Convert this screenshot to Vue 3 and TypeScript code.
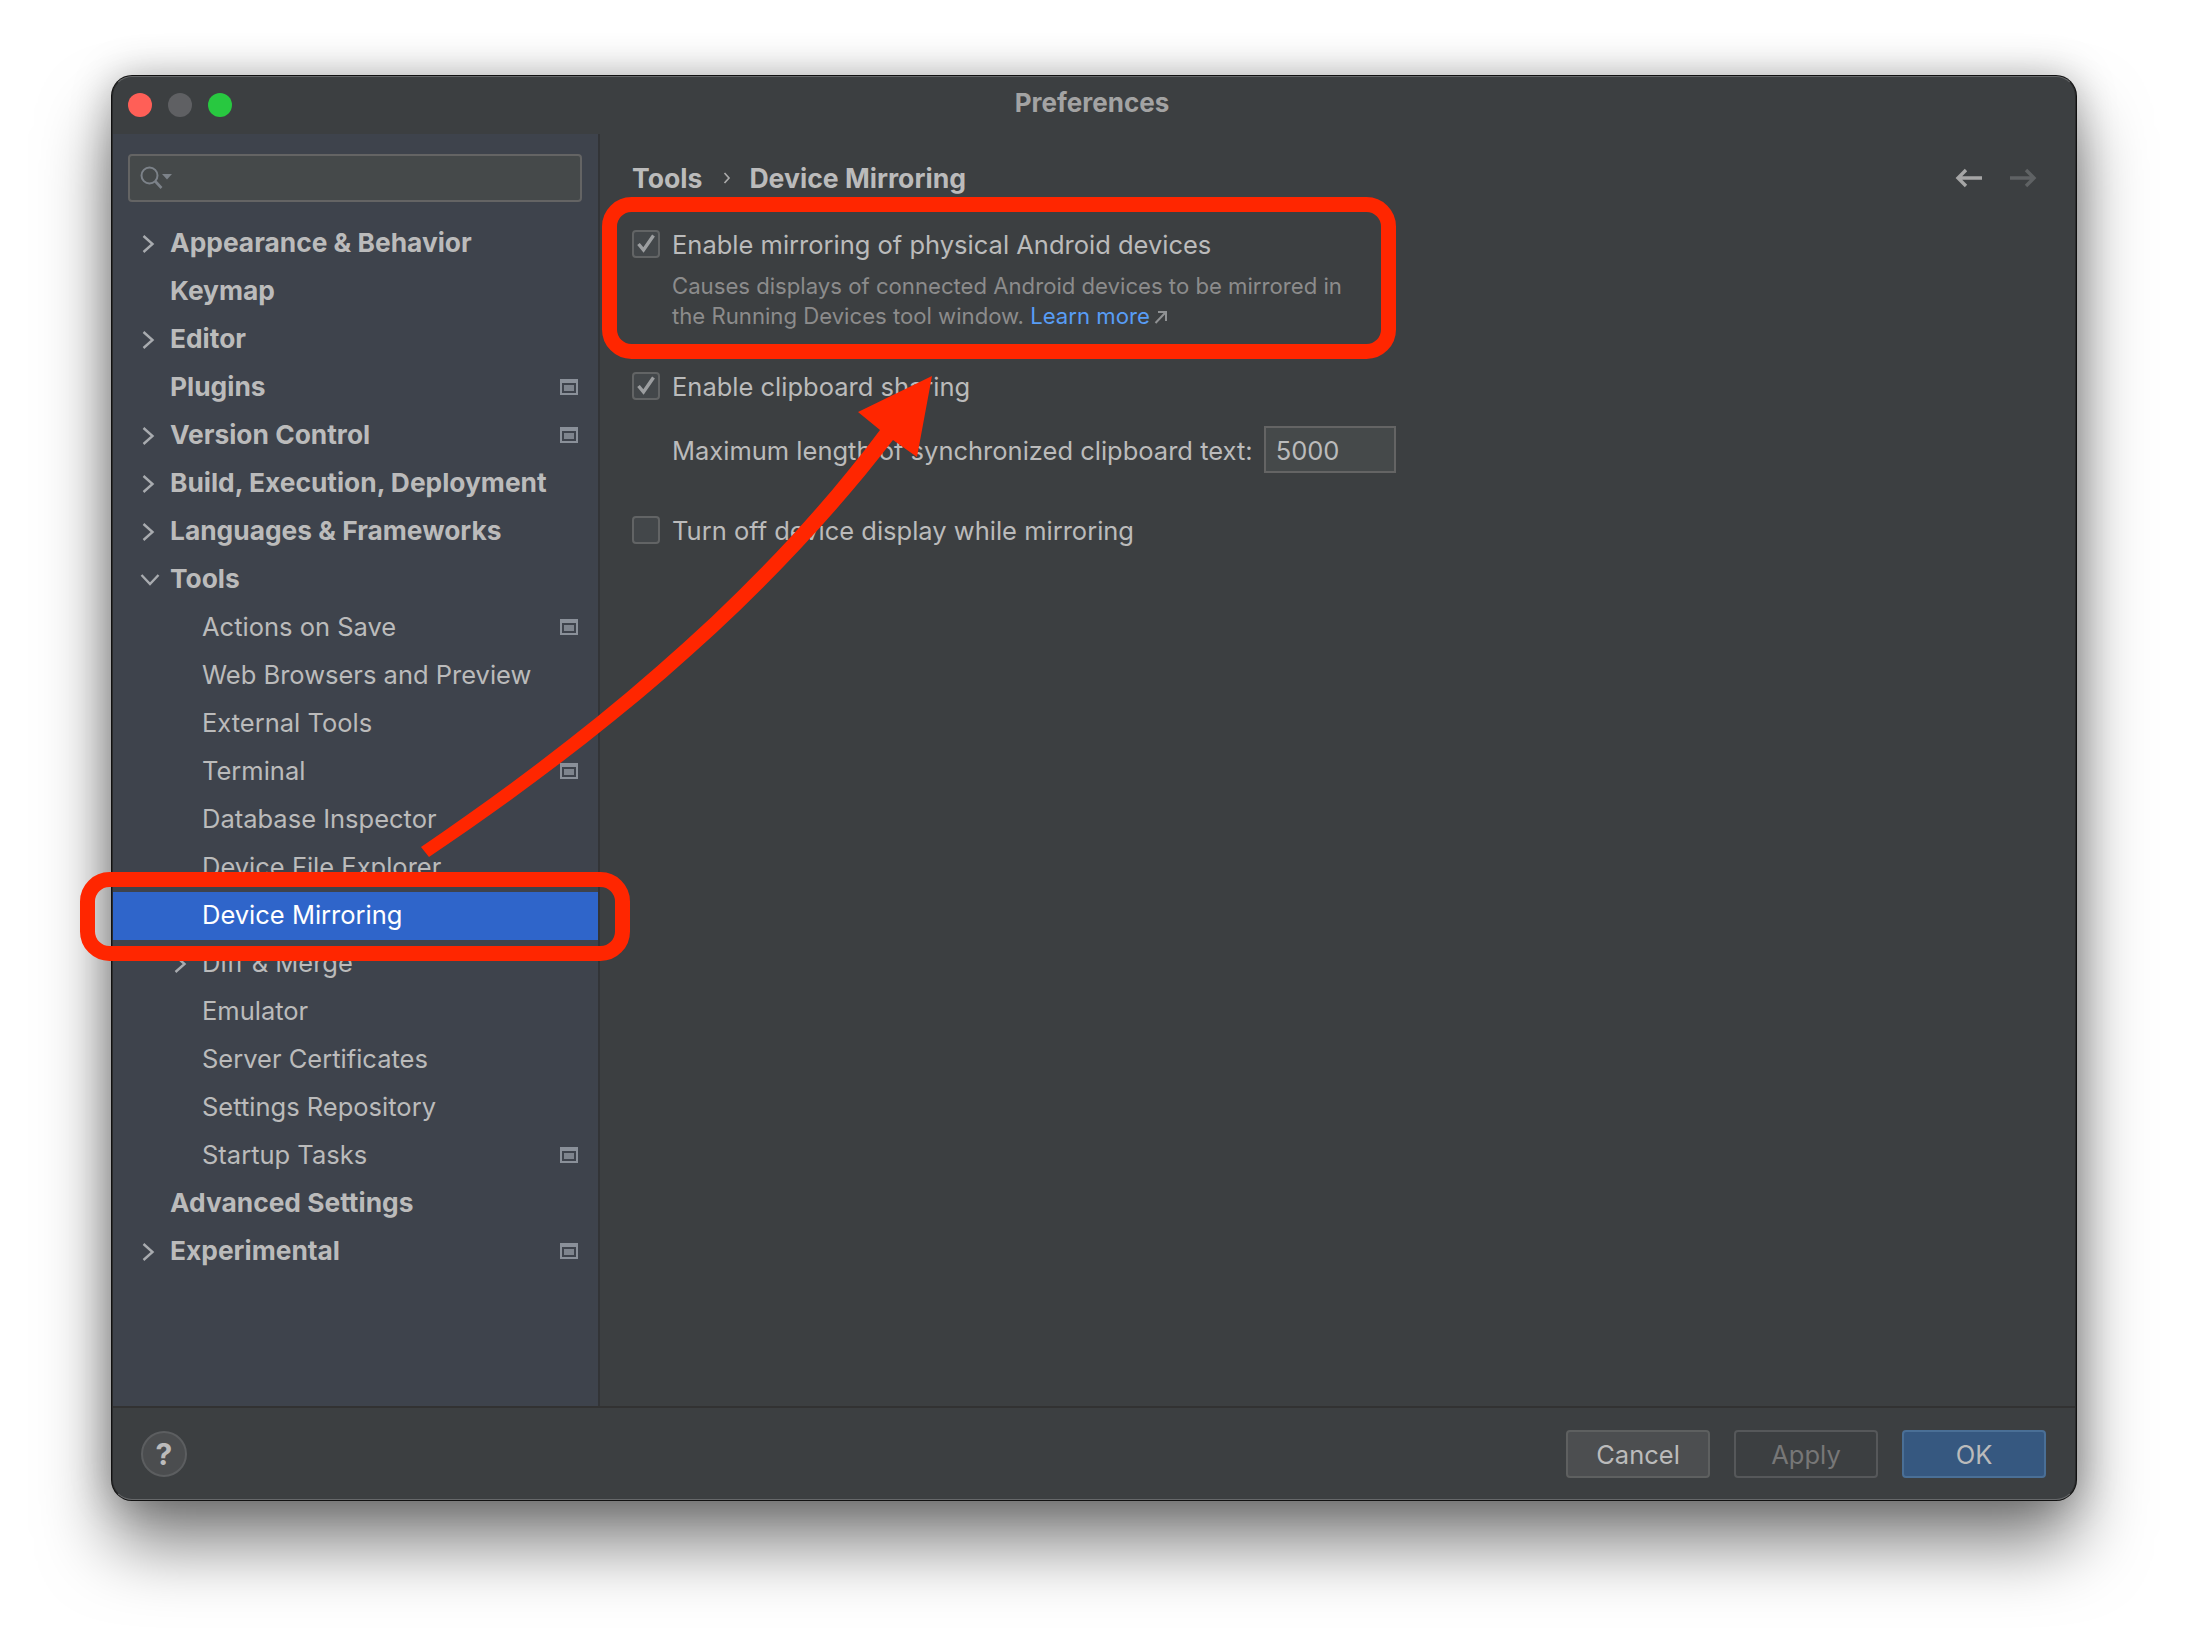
<script setup lang="ts">
interface Row { label: string; level: 0 | 1; chev?: 'right' | 'down'; mod?: boolean; sel?: boolean }
const rows: Row[] = [
  { label: 'Appearance & Behavior', level: 0, chev: 'right' },
  { label: 'Keymap', level: 0 },
  { label: 'Editor', level: 0, chev: 'right' },
  { label: 'Plugins', level: 0, mod: true },
  { label: 'Version Control', level: 0, chev: 'right', mod: true },
  { label: 'Build, Execution, Deployment', level: 0, chev: 'right' },
  { label: 'Languages & Frameworks', level: 0, chev: 'right' },
  { label: 'Tools', level: 0, chev: 'down' },
  { label: 'Actions on Save', level: 1, mod: true },
  { label: 'Web Browsers and Preview', level: 1 },
  { label: 'External Tools', level: 1 },
  { label: 'Terminal', level: 1, mod: true },
  { label: 'Database Inspector', level: 1 },
  { label: 'Device File Explorer', level: 1 },
  { label: 'Device Mirroring', level: 1, sel: true },
  { label: 'Diff & Merge', level: 1, chev: 'right' },
  { label: 'Emulator', level: 1 },
  { label: 'Server Certificates', level: 1 },
  { label: 'Settings Repository', level: 1 },
  { label: 'Startup Tasks', level: 1, mod: true },
  { label: 'Advanced Settings', level: 0 },
  { label: 'Experimental', level: 0, chev: 'right', mod: true },
]
</script>

<template>
  <div class="page">
    <div class="window">
      <header class="titlebar">
        <span class="light red"></span>
        <span class="light gray"></span>
        <span class="light green"></span>
        <span class="title">Preferences</span>
      </header>
      <div class="body">
        <aside class="sidebar">
          <div class="search">
            <svg width="34" height="26" viewBox="0 0 34 26" class="search-icon">
              <circle cx="9.5" cy="9.5" r="8" fill="none" stroke="#7c8289" stroke-width="2" />
              <path d="M15 15l6.5 7" stroke="#7c8289" stroke-width="2.6" fill="none" />
              <path d="M22 8h10l-5 5.5z" fill="#7c8289" />
            </svg>
          </div>
          <ul class="tree">
            <li
              v-for="r in rows"
              :key="r.label"
              class="row"
              :class="[r.level === 0 ? 'lvl0' : 'lvl1', { sel: r.sel }]"
            >
              <span class="slot">
                <svg v-if="r.chev === 'right'" class="right" width="13" height="20" viewBox="0 0 13 20">
                  <path d="M1.5 2l9 8-9 8" fill="none" stroke="#a8abaf" stroke-width="2.4" />
                </svg>
                <svg v-else-if="r.chev === 'down'" width="20" height="13" viewBox="0 0 20 13" class="down">
                  <path d="M1.5 2l8.5 9 8.5-9" fill="none" stroke="#a8abaf" stroke-width="2.4" />
                </svg>
              </span>
              <span class="label">{{ r.label }}</span>
              <svg v-if="r.mod" class="mod" width="18" height="16" viewBox="0 0 18 16">
                <rect width="18" height="16" fill="#8a9099" />
                <rect x="2" y="4" width="14" height="10" fill="#3e434c" />
                <rect x="4" y="6" width="10" height="6" fill="#7e848d" />
              </svg>
            </li>
          </ul>
        </aside>
        <main class="main">
          <div class="crumbs">
            <span class="crumb">Tools</span>
            <svg width="8" height="14" viewBox="0 0 8 14" class="crumb-sep">
              <path d="M1.5 2l4.5 5-4.5 5" fill="none" stroke="#aaa" stroke-width="1.7" />
            </svg>
            <span class="crumb">Device Mirroring</span>
            <span class="spacer"></span>
            <svg width="28" height="20" viewBox="0 0 28 20">
              <path d="M27 10H4M11 2l-8 8 8 8" fill="none" stroke="#a6a6a6" stroke-width="3.4" />
            </svg>
            <svg width="28" height="20" viewBox="0 0 28 20" class="fwd">
              <path d="M1 10h23M17 2l8 8-8 8" fill="none" stroke="#5f6264" stroke-width="3.4" />
            </svg>
          </div>

          <label class="check first">
            <span class="box">
              <svg width="24" height="24" viewBox="0 0 24 24"><path d="M4.5 12l5 6L19.5 3.5" fill="none" stroke="#9c9ea0" stroke-width="3.4" /></svg>
            </span>
            <span>Enable mirroring of physical Android devices</span>
          </label>
          <p class="desc">
            Causes displays of connected Android devices to be mirrored in<br />
            the Running Devices tool window. <a class="link">Learn more</a>
            <svg width="13" height="14" viewBox="0 0 13 14" class="ext">
              <path d="M1.5 13L11 3M4 2h8v9" fill="none" stroke="#8f9193" stroke-width="2" />
            </svg>
          </p>

          <label class="check clip">
            <span class="box">
              <svg width="24" height="24" viewBox="0 0 24 24"><path d="M4.5 12l5 6L19.5 3.5" fill="none" stroke="#9c9ea0" stroke-width="3.4" /></svg>
            </span>
            <span>Enable clipboard sharing</span>
          </label>
          <div class="maxrow">
            <span class="maxlabel">Maximum length of synchronized clipboard text:</span>
            <span class="input">5000</span>
          </div>
          <label class="check off">
            <span class="box"></span>
            <span>Turn off device display while mirroring</span>
          </label>
        </main>
      </div>
      <footer class="footer">
        <span class="help">?</span>
        <span class="spacer"></span>
        <span class="btn cancel">Cancel</span>
        <span class="btn apply">Apply</span>
        <span class="btn ok">OK</span>
      </footer>
    </div>

    <svg class="annot" width="2188" height="1648" viewBox="0 0 2188 1648">
      <rect x="609.5" y="204.5" width="779" height="147" rx="22" fill="none" stroke="#ff2600" stroke-width="15" />
      <rect x="87.5" y="879.5" width="535" height="74" rx="22" fill="none" stroke="#ff2600" stroke-width="15" />
      <path
        d="M421 847C600 725 760 590 880 430L858 412L932 376L917 457L893 440C770 600 610 735 429 857Z"
        fill="#ff2600"
      />
    </svg>
  </div>
</template>

<style>
html, body { margin: 0; background: #fff; }
</style>

<style scoped>
.page {
  position: relative;
  box-sizing: border-box;
  width: 2188px;
  height: 1648px;
  padding: 76px 112px 0 112px;
  overflow: hidden;
  background: #fff;
  font-family: Inter, "Liberation Sans", sans-serif;
  font-size: 25.5px;
  color: #bbbbbb;
}
.window {
  box-sizing: border-box;
  height: 1424px;
  display: flex;
  flex-direction: column;
  background: #3c3f41;
  border: 1px solid #2a2b2c;
  border-top-color: #66686a;
  border-bottom-color: #66686a;
  border-radius: 20px;
  box-shadow: 0 0 0 1px #111, 0 44px 70px rgba(0, 0, 0, 0.5), 0 0 40px rgba(0, 0, 0, 0.28);
  overflow: hidden;
}
.titlebar {
  position: relative;
  height: 57px;
  flex: none;
  display: flex;
  align-items: center;
  gap: 16px;
  padding: 0 0 1px 15px;
  box-sizing: border-box;
}
.light { width: 24px; height: 24px; border-radius: 50%; }
.red { background: #ff5f57; }
.gray { background: #5f6063; }
.green { background: #28c840; }
.title {
  position: absolute;
  left: 0;
  right: 0;
  top: 10px;
  padding-right: 4px;
  text-align: center;
  font-weight: 700;
  color: #a3a3a3;
  font-size: 26px;
}
.body { flex: 1; display: flex; min-height: 0; }
.sidebar {
  box-sizing: content-box;
  width: 485px;
  flex: none;
  background: #3e434c;
  border-right: 2px solid #323437;
}
.search {
  box-sizing: border-box;
  height: 48px;
  margin: 20px 16px 18px 15px;
  background: #45494a;
  border: 2px solid #646464;
  border-radius: 4px;
  display: flex;
  align-items: center;
  padding-left: 10px;
}
.search-icon { margin-top: 2px; }
.tree { list-style: none; margin: 0; padding: 0; }
.row {
  height: 48px;
  display: flex;
  align-items: center;
  padding-right: 20px;
}
.lvl0 { padding-left: 30px; font-weight: 700; font-size: 26.35px; }
.lvl1 { padding-left: 62px; }
.slot { width: 27px; flex: none; display: flex; align-items: center; }
.right { margin-left: -1px; }
.down { margin-left: -3px; margin-bottom: 2px; }
.label { flex: 1; white-space: nowrap; padding-bottom: 3px; }
.lvl0 .label { padding-bottom: 5px; }
.sel { background: #2f65ca; color: #fff; }
.mod { flex: none; margin-bottom: 2px; }
.main {
  flex: 1;
  box-sizing: border-box;
  padding: 24px 38px 0 32px;
  min-width: 0;
}
.crumbs { height: 40px; display: flex; align-items: center; }
.crumb { font-weight: 700; font-size: 26.6px; }
.crumb-sep { margin: 0 18px 0 21px; }
.spacer { flex: 1; }
.fwd { margin-left: 26px; }
.check { display: flex; align-items: center; height: 36px; gap: 12px; }
.box {
  box-sizing: border-box;
  width: 28px;
  height: 28px;
  border: 2px solid #626465;
  border-radius: 4px;
  background: #43474a;
  display: flex;
  align-items: center;
  justify-content: center;
}
.first { margin-top: 28px; }
.desc {
  margin: 9px 0 0 40px;
  font-size: 22.15px;
  line-height: 30px;
  color: #8c8c8c;
}
.link { color: #589df6; }
.ext { margin-left: 4px; }
.clip { margin-top: 37px; }
.maxrow {
  margin: 22px 0 0 40px;
  height: 47px;
  display: flex;
  align-items: center;
  gap: 11px;
}
.maxlabel { padding-top: 2px; }
.input {
  box-sizing: border-box;
  width: 132px;
  height: 47px;
  background: #45494a;
  border: 2px solid #646464;
  padding: 2px 0 0 10px;
  display: flex;
  align-items: center;
}
.off { margin-top: 39px; }
.footer {
  flex: none;
  height: 93px;
  box-sizing: border-box;
  border-top: 2px solid #323232;
  display: flex;
  align-items: center;
  gap: 24px;
  padding: 0 29px 0 28px;
}
.help {
  box-sizing: border-box;
  width: 46px;
  height: 46px;
  border-radius: 50%;
  background: #4b4d4f;
  border: 2px solid #5c5e60;
  display: flex;
  align-items: center;
  justify-content: center;
  font-weight: 700;
  font-size: 30px;
  color: #bbb;
}
.btn {
  box-sizing: border-box;
  width: 144px;
  height: 48px;
  padding-top: 1px;
  border-radius: 4px;
  display: flex;
  align-items: center;
  justify-content: center;
  border: 2px solid #5e6060;
}
.cancel { background: #4c4e50; }
.apply { color: #777; border-color: #56585a; }
.ok { background: #365880; border-color: #4a6f96; }
.annot { position: absolute; left: 0; top: 0; pointer-events: none; }
</style>
